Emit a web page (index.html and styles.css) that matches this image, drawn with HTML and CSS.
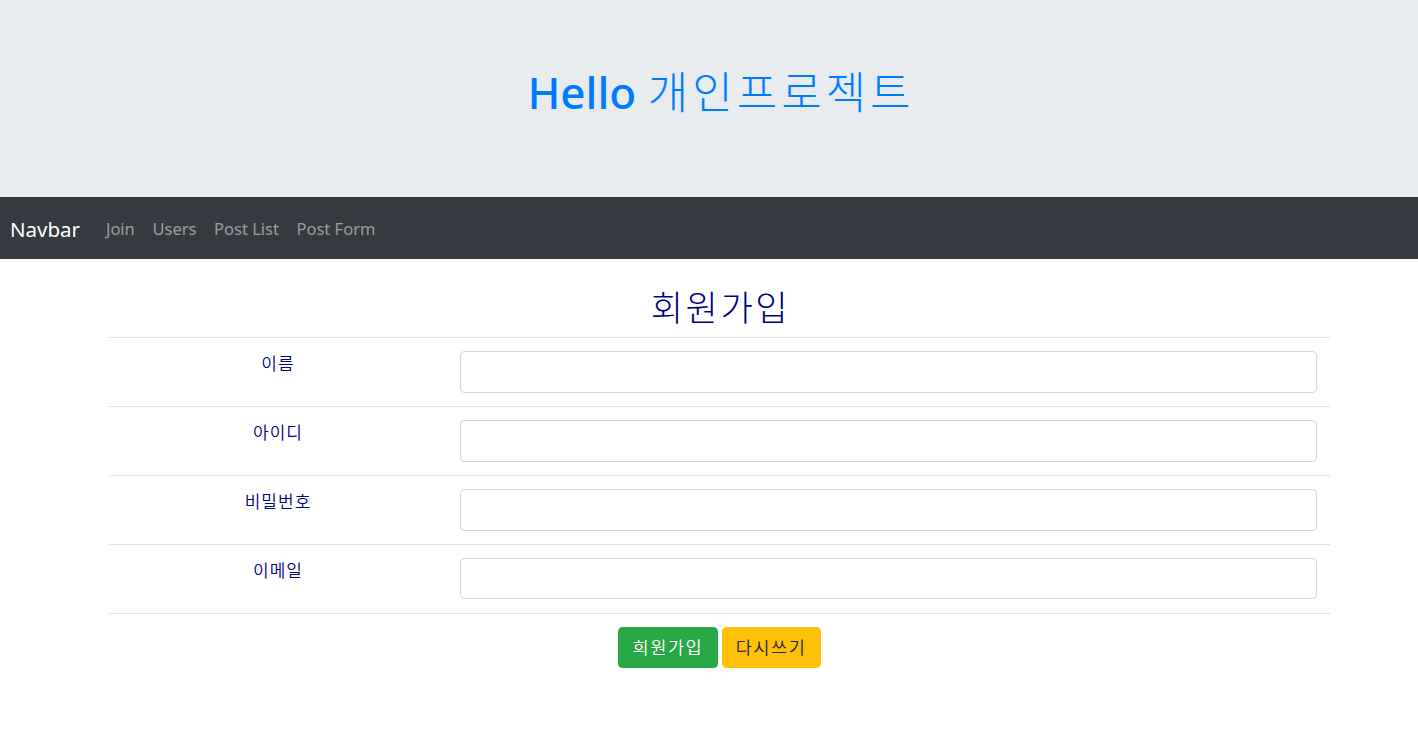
FILE: index.html
```html
<!DOCTYPE html>
<html lang="ko">
<head>
<meta charset="utf-8">
<title>회원가입</title>
<link rel="stylesheet" href="styles.css">
</head>
<body>
<header class="jumbotron">
  <h1 class="title"><span class="title-latin">Hello</span> <span class="title-ko">개인프로젝트</span></h1>
</header>
<nav class="navbar">
  <a class="brand" href="#">Navbar</a>
  <ul class="nav">
    <li><a class="nav-link" href="#">Join</a></li>
    <li><a class="nav-link" href="#">Users</a></li>
    <li><a class="nav-link" href="#">Post List</a></li>
    <li><a class="nav-link" href="#">Post Form</a></li>
  </ul>
</nav>
<main class="container">
  <h2 class="heading">회원가입</h2>
  <form>
    <table class="table">
      <tr>
        <td class="label">이름</td>
        <td class="field"><input class="form-control" type="text"></td>
      </tr>
      <tr>
        <td class="label">아이디</td>
        <td class="field"><input class="form-control" type="text"></td>
      </tr>
      <tr>
        <td class="label">비밀번호</td>
        <td class="field"><input class="form-control" type="password"></td>
      </tr>
      <tr>
        <td class="label">이메일</td>
        <td class="field"><input class="form-control" type="email"></td>
      </tr>
      <tr>
        <td class="actions" colspan="2"><button class="btn btn-success" type="submit">회원가입</button><button class="btn btn-warning" type="reset">다시쓰기</button></td>
      </tr>
    </table>
  </form>
</main>
</body>
</html>
```
FILE: styles.css
```css
* { box-sizing: border-box; }
html, body { margin: 0; padding: 0; }
body {
  font-family: "Noto Sans", "Noto Sans CJK KR", sans-serif;
  font-size: 17.6px;
  line-height: 1.5;
  color: #212529;
  background: #fff;
}
.jumbotron {
  height: 197px;
  background: #e9ecef;
  padding-top: 66px;
  text-align: center;
}
.title {
  margin: 0;
  font-size: 44px;
  font-weight: 400;
  line-height: 52.8px;
  color: #007bff;
  padding-left: 24px;
}
.title-latin {
  font-weight: 500;
}
.title-ko {
  font-weight: 300;
  letter-spacing: 4px;
}
.navbar {
  height: 62px;
  background: #343a40;
  display: flex;
  align-items: center;
  padding: 0 10px 0 10px;
}
.brand {
  color: #fff;
  text-decoration: none;
  font-size: 20.5px;
  margin-right: 17px;
  padding-top: 2px;
}
.nav {
  display: flex;
  list-style: none;
  margin: 0;
  padding: 2px 0 0;
}
.nav-link {
  display: block;
  padding: 0 8.8px;
  color: rgba(255,255,255,.5);
  text-decoration: none;
  font-size: 16.5px;
}
.container {
  width: 1221px;
  margin: 0 0 0 109px;
  padding-top: 27px;
}
.heading {
  margin: 0 0 8.8px;
  text-align: center;
  font-size: 35.2px;
  font-weight: 300;
  line-height: 42px;
  letter-spacing: 2.5px;
  color: #000080;
  padding-left: 2px;
}
.table {
  width: 100%;
  border-collapse: collapse;
}
.table td {
  border-top: 1px solid #dee2e6;
  padding: 13.2px;
  vertical-align: top;
}
.label {
  width: 338px;
  text-align: center;
  color: #000080;
  font-size: 17px;
  font-weight: 350;
  letter-spacing: 1px;
}
.form-control {
  display: block;
  width: 100%;
  height: 41.6px;
  padding: 6.6px 13.2px;
  font: inherit;
  border: 1px solid #ced4da;
  border-radius: 4.4px;
  background: #fff;
}
.actions {
  text-align: center;
}
.btn {
  display: inline-block;
  height: 41.6px;
  padding: 6.6px 13.2px;
  border: 1px solid transparent;
  border-radius: 4.4px;
  font: inherit;
  font-size: 17.6px;
  font-weight: 350;
  line-height: 26.4px;
  letter-spacing: 1.5px;
  margin: 0 2px;
  cursor: pointer;
}
.btn-success { background: #28a745; border-color: #28a745; color: #fff; }
.btn-warning { background: #ffc107; border-color: #ffc107; color: #212529; }
```
